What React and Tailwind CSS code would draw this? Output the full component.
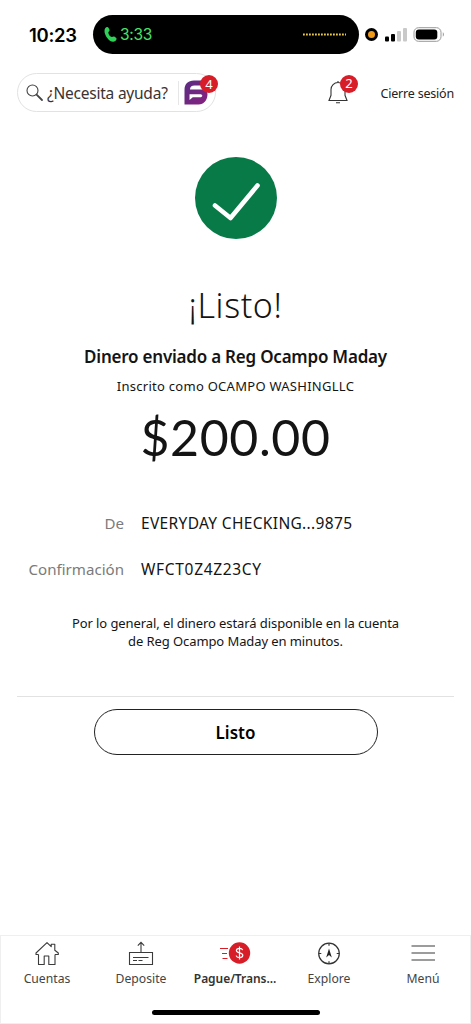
import clsx from "clsx";

const details = [
    { label: "De", value: "EVERYDAY CHECKING...9875", valueClass: "tracking-[0.34px]" },
    { label: "Confirmación", value: "WFCT0Z4Z23CY", valueClass: "tracking-[0.68px]" },
];

const tabs = [
    { label: "Cuentas", Icon: HomeIcon },
    { label: "Deposite", Icon: DepositIcon },
    { label: "Pague/Trans...", Icon: PayIcon, active: true },
    { label: "Explore", Icon: CompassIcon },
    { label: "Menú", Icon: MenuIcon },
];

function HomeIcon() {
    return (
        <svg width="26" height="26" viewBox="0 0 26 26" fill="none" stroke="#3b3b3b" strokeWidth="1.1" strokeLinejoin="round">
            <path d="M4.500 13.500V23.500h5.700V15h4.600v8.500H21v-10M4.500 13.500H2V12L13 1.700l4.200 4V3.200h3.600v6L24.300 12v1.500H21" />
        </svg>
    );
}

function DepositIcon() {
    return (
        <svg width="26" height="26" viewBox="0 0 26 26" fill="none" stroke="#3b3b3b" strokeWidth="1.1">
            <path d="M1.500 11.500h23V23.500h-23zM13 11.500V1.500M9.800 4.700L13 1.400l3.200 3.300M5 16.500h15.500M5 19.500h4M10.500 19.500h4" />
        </svg>
    );
}

function PayIcon() {
    return (
        <svg width="32" height="26" viewBox="0 0 32 26" fill="none">
            <path d="M1 7.500h8M3 12.500h5M3.500 17.500h5" stroke="#d71e28" strokeWidth="1" />
            <circle cx="20.500" cy="12" r="10.700" fill="#d71e28" />
            <path
                d="M23.700 9.100c-.4-1.200-1.700-1.700-3.200-1.700-1.800 0-3.100.8-3.100 2.200 0 3.200 6.400 1.400 6.400 4.700 0 1.500-1.400 2.300-3.300 2.300-1.700 0-3-.7-3.400-2M20.500 5.500v13"
                stroke="#fff"
                strokeWidth="1.200"
            />
        </svg>
    );
}

function CompassIcon() {
    return (
        <svg width="26" height="26" viewBox="0 0 26 26" fill="none" stroke="#333" strokeWidth="1.200">
            <circle cx="13" cy="12.500" r="10.300" />
            <path d="M13 2.200v2.600M13 20.200v2.600M2.700 12.500h2.600M20.700 12.500h2.600" />
            <path d="M13 7.500l2.800 9L13 14l-2.800 2.500z" fill="#222" stroke="none" />
        </svg>
    );
}

function MenuIcon() {
    return (
        <svg width="26" height="26" viewBox="0 0 26 26" stroke="#3b3b3b" strokeWidth="1.200">
            <path d="M1.500 5h23.500M1.500 12h23.500M1.500 19h23.500" />
        </svg>
    );
}

function StatusBar() {
    return (
        <div className="flex h-[39px] items-center font-['Inter',sans-serif]">
            <span className="ml-[29px] w-16 pt-[2px] text-[18.500px] font-semibold tracking-[-0.3px] text-black">10:23</span>
            <div className="flex h-[39px] w-[266px] items-center rounded-full bg-black pl-[11px] pr-[13px]">
                <svg width="13" height="17" viewBox="0 0 13 17" fill="#30d158">
                    <path d="M1.200 2.200C2.200.8 3.800.6 4.500 1.800l1 2c.5 1-.8 1.700-1.100 2.500-.3 1.700 1.700 4.400 3.400 4.800.8.100 1.500-1 2.500-.5l1.700 1.200c1 .8.600 2.300-.7 3.300-2.400 1.700-5.900.2-8.200-3.300C.7 8.300-.3 4.600 1.200 2.200z" />
                </svg>
                <span className="ml-[3px] text-[15.500px] tracking-[-0.3px] text-[#4be06a]">3:33</span>
                <svg className="ml-auto" width="43" height="3" viewBox="0 0 43 3">
                    <path d="M0 1.500h43" stroke="#e8c84a" strokeWidth="2" strokeDasharray="1.800 1.200" />
                </svg>
            </div>
            <span className="ml-[6px] flex h-[13px] w-[13px] items-center justify-center rounded-full bg-black">
                <span className="h-[7px] w-[7px] rounded-full bg-[#f09a1a]" />
            </span>
            <svg className="ml-[7px]" width="23" height="14" viewBox="0 0 23 14">
                <rect x="0" y="8.500" width="4" height="5" rx="1" />
                <rect x="6" y="6" width="4" height="7.500" rx="1" />
                <rect x="12" y="3" width="4" height="10.500" rx="1" fill="#c9c9c9" />
                <rect x="18" y="0" width="4" height="13.500" rx="1" fill="#c9c9c9" />
            </svg>
            <svg className="ml-[5px]" width="32" height="15" viewBox="0 0 32 15" fill="none">
                <rect x="1" y=".7" width="27" height="13.600" rx="4.500" stroke="#999" />
                <rect x="2.800" y="2.500" width="21.500" height="10" rx="3" fill="#000" />
                <path d="M29.800 5.300c1.500.6 1.500 3.800 0 4.400z" fill="#999" />
            </svg>
        </div>
    );
}

function Badge({ children, className }) {
    return (
        <span
            className={clsx(
                "absolute flex h-[18px] w-[18px] items-center justify-center rounded-full bg-[#d71e28] text-[13px] leading-none text-white",
                className
            )}
        >
            {children}
        </span>
    );
}

function Header() {
    return (
        <header className="mt-[19px] flex h-[39px] items-center">
            <div className="relative ml-[17px] flex h-[39px] w-[199px] items-center rounded-full border border-[#e2e2e2] pl-2">
                <svg width="18" height="18" viewBox="0 0 18 18" fill="none" stroke="#444">
                    <circle cx="6.500" cy="6.500" r="5.500" strokeWidth="1.100" />
                    <path d="M10.600 10.600L16 16" strokeWidth="1.800" strokeLinecap="round" />
                </svg>
                <span className="ml-[3px] w-[131px] whitespace-nowrap pt-[2px] text-[15.500px] tracking-[-0.23px] text-[#3b3331]">
                    ¿Necesita ayuda?
                </span>
                <span className="h-6 w-px bg-[#e6e6e6]" />
                <svg className="ml-[5px]" width="24" height="25" viewBox="0 0 24 25">
                    <defs>
                        <linearGradient id="fargo" x1="0" y1="0" x2="1" y2="1">
                            <stop offset="0" stopColor="#5a2d82" />
                            <stop offset="1" stopColor="#86217f" />
                        </linearGradient>
                    </defs>
                    {/* rounded "F" speech bubble */}
                    <path
                        fill="url(#fargo)"
                        fillRule="evenodd"
                        d="M10 .5h9v5h-8.500c-3 0-4.500 1.500-4.500 4h13c2.500 0 4.500 1.700 4.500 4.500 0 6-3.500 10.500-9 10.500H.5V10C.5 4 4 .5 10 .5zM5.500 14.300v5.700l3.300-2.700H16c1.500 0 2.300-.6 2.300-1.500s-.8-1.500-2.300-1.500z"
                    />
                </svg>
                <Badge className="-right-[3px] top-px">4</Badge>
            </div>
            <div className="relative ml-[111px] h-[26px] w-[22px]">
                <svg width="22" height="26" viewBox="0 0 22 26" fill="none" stroke="#333" strokeWidth="1.100">
                    <path d="M2 20.500h18l-2-5.200V9.500a7 7 0 0 0-14 0v5.800zM11 2.500V1M9 22.700h4" />
                </svg>
                <Badge className="-top-[5px] left-[13px]">2</Badge>
            </div>
            <span className="ml-auto mr-[17px] whitespace-nowrap pt-[3px] text-[12.500px] tracking-[-0.2px] text-[#222]">
                Cierre sesión
            </span>
        </header>
    );
}

function Confirmation() {
    return (
        <main className="flex flex-col items-center text-[#141414]">
            <svg className="mt-[44px]" width="84" height="84" viewBox="0 0 84 84" fill="none">
                <circle cx="42" cy="42" r="41" fill="#087a48" />
                <path d="M21 49.500L36.500 62 63.500 29.500" stroke="#fff" strokeWidth="4.600" strokeLinecap="round" strokeLinejoin="round" />
            </svg>
            <h1 className="mt-[40px] whitespace-nowrap text-[34px] font-light leading-[50px] tracking-[0.6px]">¡Listo!</h1>
            <h2 className="mt-[15px] whitespace-nowrap text-[17px] font-semibold leading-6 tracking-[-0.22px]">
                Dinero enviado a Reg Ocampo Maday
            </h2>
            <p className="mt-[7px] whitespace-nowrap text-[13px] leading-5 tracking-[0.27px]">Inscrito como OCAMPO WASHINGLLC</p>
            <p className="mt-[9px] whitespace-nowrap font-['Lato',sans-serif] text-[50px] leading-[64px] tracking-[0.6px]">$200.00</p>
            <dl className="mt-[43px] w-full leading-[22px]">
                {details.map((row) => (
                    <div key={row.label} className="mb-6 flex">
                        <dt className="w-[124px] text-right text-[15.100px] text-[#7b7b7b]">{row.label}</dt>
                        <dd className={clsx("ml-[17px] whitespace-nowrap text-[15.500px]", row.valueClass)}>{row.value}</dd>
                    </div>
                ))}
            </dl>
            <p className="mt-[10px] whitespace-nowrap text-center text-[13px] leading-[18px] tracking-[-0.09px]">
                Por lo general, el dinero estará disponible en la cuenta
                <br />
                de Reg Ocampo Maday en minutos.
            </p>
        </main>
    );
}

function TabBar() {
    return (
        <nav className="mt-auto flex h-[89px] flex-col border border-[#efefef]">
            <div className="-ml-px flex">
                {tabs.map(({ label, Icon, active }) => (
                    <button
                        key={label}
                        type="button"
                        className={clsx(
                            "flex w-1/5 flex-col items-center whitespace-nowrap pt-[5px] leading-[18px]",
                            active ? "text-[12px] font-semibold tracking-[-0.05px] text-[#333]" : "text-[12.200px] text-[#444]"
                        )}
                    >
                        <Icon />
                        <span className="mt-[3px]">{label}</span>
                    </button>
                ))}
            </div>
            <div className="mx-auto mb-[8px] mt-auto h-[5px] w-[168px] rounded-full bg-black" />
        </nav>
    );
}

export default function App() {
    return (
        <div className="flex h-[1024px] w-[471px] flex-col overflow-hidden bg-white pt-[15px] font-['Noto_Sans',sans-serif]">
            <StatusBar />
            <Header />
            <Confirmation />
            <div className="mx-[17px] mt-[46px] border-t border-[#e2e2e2]" />
            <button
                type="button"
                className="mx-auto mt-3 h-[46px] w-[284px] rounded-full border-[1.500px] border-[#222] pt-[2px] text-[17px] font-semibold text-black"
            >
                Listo
            </button>
            <TabBar />
        </div>
    );
}
